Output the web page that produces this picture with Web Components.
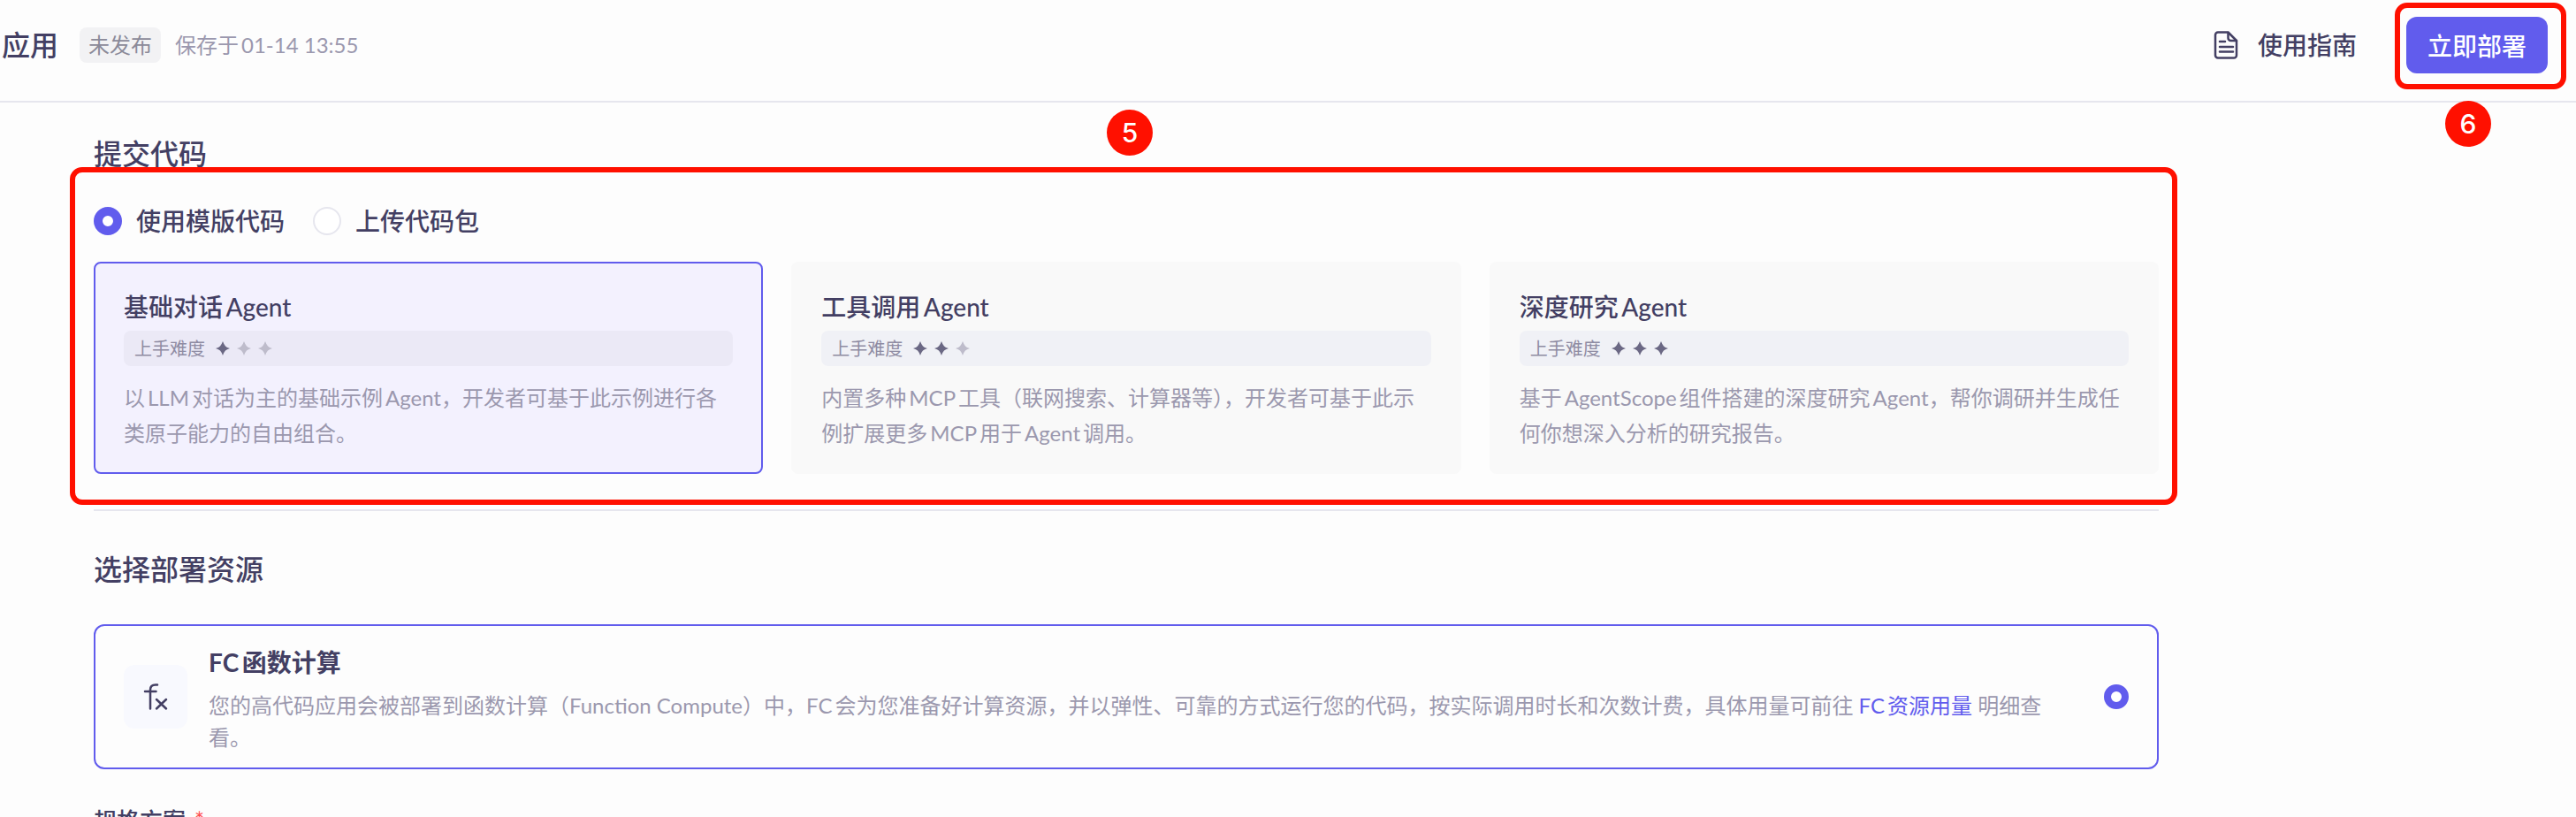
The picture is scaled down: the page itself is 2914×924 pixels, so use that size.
<!DOCTYPE html>
<html lang="zh-CN">
<head>
<meta charset="utf-8">
<title>高代码应用</title>
<style>
  html, body { margin: 0; height: 100%; }
  body {
    --ink: #433f63;
    --muted: #9b98ae;
    --brand: #615ced;
    --line: #e6e6ee;
    --mark: #ff1000;
    background: #fdfdfd;
    color: var(--ink);
    font-family: Lato, "Noto Sans CJK SC", sans-serif;
    font-size: 24px;
    text-autospace: normal;
    overflow: hidden;
  }
</style>
</head>
<body>
<deploy-page></deploy-page>

<script>
class BaseElement extends HTMLElement {
  constructor() {
    super();
    this.attachShadow({ mode: 'open' });
    this.shadowRoot.innerHTML = this.render();
  }

  render() { return ''; }
}

// Numbered red frame drawn around whatever is slotted in
class StepCallout extends BaseElement {
  render() {
    return `
      <style>
        :host { display: block; position: relative; }
        .ring {
          position: absolute;
          inset: var(--ring-inset, -16px);
          border: 6px solid var(--mark);
          border-radius: 14px;
          pointer-events: none;
        }
        .step {
          position: absolute;
          left: 50%;
          top: var(--step-top);
          width: 52px;
          height: 52px;
          margin-left: var(--step-shift, -26px);
          border-radius: 50%;
          background: var(--mark);
          color: #fff;
          font: 500 30px/52px Inter, sans-serif;
          text-align: center;
        }
      </style>
      <slot></slot>
      <div class="ring"></div>
      <div class="step">${this.getAttribute('step')}</div>
    `;
  }
}

class AppHeader extends BaseElement {
  render() {
    return `
      <style>
        :host {
          display: flex;
          align-items: center;
          justify-content: space-between;
          height: 114px;
          padding-right: 32px;
          border-bottom: 2px solid var(--line);
        }
        .info, .actions { display: flex; align-items: center; padding-bottom: 12px; }
        .info { padding-left: 2px; }
        .actions { gap: 32px; }
        h1 { margin: 0; font-size: 32px; line-height: 48px; font-weight: 500; }
        .tag {
          margin: 0 16px 0 24px;
          padding: 0 10px;
          border-radius: 8px;
          background: #f2f2f4;
          color: #8b8a99;
          line-height: 40px;
        }
        .saved { color: var(--muted); line-height: 40px; }
        a {
          display: flex;
          align-items: center;
          gap: 20px;
          padding: 0 24px;
          color: inherit;
          font-size: 28px;
          font-weight: 500;
          line-height: 40px;
          text-decoration: none;
        }
        button {
          display: block;
          height: 64px;
          padding: 0 24px;
          border: 0;
          border-radius: 12px;
          background: var(--brand);
          color: #fff;
          font: inherit;
          font-size: 28px;
          font-weight: 500;
        }
        step-callout {
          --ring-inset: -16px -21px -18px -13px;
          --step-top: 95px;
          --step-shift: -36px;
        }
      </style>
      <div class="info">
        <h1>应用</h1>
        <span class="tag">未发布</span>
        <span class="saved">保存于01-14 13:55</span>
      </div>
      <div class="actions">
        <a href="#guide">
          <svg width="32" height="32" viewBox="0 0 32 32" fill="none" stroke="currentColor" stroke-width="2.500" stroke-linejoin="round" stroke-linecap="round">
            <path d="M18.500 1.500H7a3 3 0 0 0-3 3v23a3 3 0 0 0 3 3h18a3 3 0 0 0 3-3V11z"/>
            <path d="M18.500 2v6a3 3 0 0 0 3 3H28"/>
            <path d="M9 12h6M9 18h15M9 23.500h15"/>
          </svg>
          使用指南
        </a>
        <step-callout step="6"><button type="button">立即部署</button></step-callout>
      </div>
    `;
  }
}

class RadioOption extends BaseElement {
  render() {
    const checked = this.hasAttribute('checked') ? 'checked' : '';
    return `
      <style>
        :host { display: block; }
        label { display: flex; align-items: center; gap: 16px; font-size: 28px; font-weight: 500; line-height: 32px; }
        input {
          appearance: none;
          box-sizing: border-box;
          width: var(--radio-size, 32px);
          height: var(--radio-size, 32px);
          margin: 0;
          border: 2px solid var(--line);
          border-radius: 50%;
          background: #fff;
        }
        input:checked { border: var(--radio-border, 10px) solid var(--brand); }
      </style>
      <label>
        <input type="radio" name="option" aria-label="${this.getAttribute('label') || this.textContent}" ${checked}>
        <slot></slot>
      </label>
    `;
  }
}

class TemplateCard extends BaseElement {
  render() {
    const level = Number(this.getAttribute('level'));
    const stars = [1, 2, 3].map(n => `
      <svg class="${n <= level ? 'on' : ''}" width="16" height="16" viewBox="0 0 16 16">
        <path d="M8 0Q9.500 4 11 5.500Q12.500 7 16 8Q12.500 9 11 10.500Q9.500 12 8 16Q6.500 12 5 10.500Q3.500 9 0 8Q3.500 7 5 5.500Q6.500 4 8 0z"/>
      </svg>`).join('');
    return `
      <style>
        :host {
          box-sizing: border-box;
          display: block;
          padding: 30px 32px 24px;
          border: 2px solid transparent;
          border-radius: 8px;
          background: #f9f9f9 border-box;
        }
        :host([selected]) { border-color: var(--brand); background: #f3f1fe; }
        h3 { margin: 0 0 8px; font-size: 28px; line-height: 38px; font-weight: 500; }
        .level {
          display: flex;
          align-items: center;
          gap: 8px;
          padding: 0 12px;
          border-radius: 8px;
          background: #f0f1f6;
          color: #8f8ca3;
          font-size: 20px;
          line-height: 40px;
        }
        :host([selected]) .level { background: #ebe9f6; }
        .level span { margin-right: 4px; }
        svg { fill: #bebccb; }
        svg.on { fill: #6b6884; }
        p { margin: 16px 0 0; color: var(--muted); line-height: 40px; }
      </style>
      <h3>${this.getAttribute('name')}</h3>
      <div class="level"><span>上手难度</span>${stars}</div>
      <p><slot></slot></p>
    `;
  }
}

class ResourceCard extends BaseElement {
  render() {
    return `
      <style>
        :host {
          display: flex;
          align-items: center;
          padding: 16px 32px;
          border: 2px solid var(--brand);
          border-radius: 12px;
        }
        .icon {
          flex: none;
          display: flex;
          align-items: center;
          justify-content: center;
          width: 72px;
          height: 72px;
          border-radius: 12px;
          background: #f8f9fe;
        }
        .body { flex: 1; margin: 0 48px 0 24px; padding-top: 4px; }
        h3 { margin: 0 0 10px; font-size: 28px; line-height: 42px; font-weight: 700; }
        p { margin: 0; color: var(--muted); line-height: 36px; }
        radio-option { --radio-size: 28px; --radio-border: 8px; }
      </style>
      <div class="icon">
        <svg width="32" height="32" viewBox="0 0 32 32" fill="none" stroke="currentColor" stroke-width="2.500" stroke-linecap="round">
          <path d="M18 2.500h-2Q10 2.500 10 8v21.500M4 10h12.500"/>
          <path d="M17 19l11 10.500M28 19L17 29.500"/>
        </svg>
      </div>
      <div class="body">
        <h3>${this.getAttribute('name')}</h3>
        <p><slot></slot></p>
      </div>
      <radio-option checked label="${this.getAttribute('name')}"></radio-option>
    `;
  }
}

class DeployPage extends BaseElement {
  render() {
    return `
      <style>
        :host { display: block; }
        main { padding: 36px 472px 0 106px; }
        h2 { margin: 0; font-size: 32px; line-height: 44px; font-weight: 500; }
        step-callout {
          margin-top: 38px;
          --ring-inset: -45px -21px -35px -27px;
          --step-top: -110px;
          --step-shift: -22px;
        }
        .source { display: flex; gap: 32px; margin-bottom: 30px; }
        .cards { display: grid; grid-template-columns: repeat(3, 1fr); gap: 32px; }
        hr { margin: 40px 0 44px; border: 0; border-top: 2px solid var(--line); }
        resource-card { margin-top: 40px; }
        a { color: var(--brand); text-decoration: none; }
        h4 { display: flex; gap: 10px; margin: 38px 0 0; font-size: 26px; line-height: 40px; font-weight: 500; }
        .required { color: #ff4d4f; font-weight: 400; }
      </style>
      <app-header></app-header>
      <main>
        <h2>提交代码</h2>
        <step-callout step="5">
          <div class="source">
            <radio-option checked>使用模版代码</radio-option>
            <radio-option>上传代码包</radio-option>
          </div>
          <div class="cards">
            <template-card selected level="1" name="基础对话Agent">以LLM对话为主的基础示例Agent，开发者可基于此示例进行各类原子能力的自由组合。</template-card>
            <template-card level="2" name="工具调用Agent">内置多种MCP工具（联网搜索、计算器等），开发者可基于此示例扩展更多MCP用于Agent调用。</template-card>
            <template-card level="3" name="深度研究Agent">基于AgentScope组件搭建的深度研究Agent，帮你调研并生成任何你想深入分析的研究报告。</template-card>
          </div>
        </step-callout>
        <hr>
        <h2>选择部署资源</h2>
        <resource-card name="FC函数计算">您的高代码应用会被部署到函数计算（Function Compute）中，FC会为您准备好计算资源，并以弹性、可靠的方式运行您的代码，按实际调用时长和次数计费，具体用量可前往 <a href="#usage">FC资源用量</a> 明细查看。</resource-card>
        <h4>规格方案 <span class="required">*</span></h4>
      </main>
    `;
  }
}

customElements.define('step-callout', StepCallout);
customElements.define('app-header', AppHeader);
customElements.define('radio-option', RadioOption);
customElements.define('template-card', TemplateCard);
customElements.define('resource-card', ResourceCard);
customElements.define('deploy-page', DeployPage);
</script>
</body>
</html>
